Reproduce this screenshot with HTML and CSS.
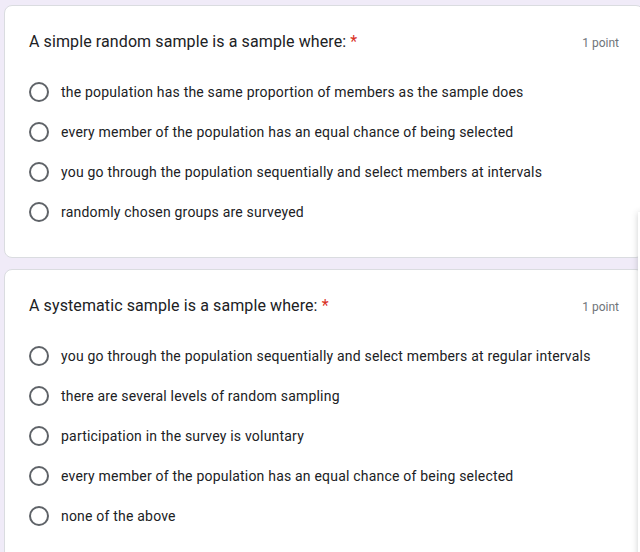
FILE: index.html
```html
<!DOCTYPE html>
<html lang="en">
<head>
  <meta charset="UTF-8" />
  <title>Quiz</title>
  <link rel="stylesheet" href="styles.css">
</head>
<body>

  <div class="form">

    <div class="card">
      <div class="question-head">
        <div class="question-title">A simple random sample is a sample where: <span class="required">*</span></div>
        <div class="points">1 point</div>
      </div>
      <div class="options">
        <label class="option"><span class="radio"></span>the population has the same proportion of members as the sample does</label>
        <label class="option"><span class="radio"></span>every member of the population has an equal chance of being selected</label>
        <label class="option"><span class="radio"></span>you go through the population sequentially and select members at intervals</label>
        <label class="option"><span class="radio"></span>randomly chosen groups are surveyed</label>
      </div>
    </div>

    <div class="card">
      <div class="question-head">
        <div class="question-title">A systematic sample is a sample where: <span class="required">*</span></div>
        <div class="points">1 point</div>
      </div>
      <div class="options">
        <label class="option"><span class="radio"></span>you go through the population sequentially and select members at regular intervals</label>
        <label class="option"><span class="radio"></span>there are several levels of random sampling</label>
        <label class="option"><span class="radio"></span>participation in the survey is voluntary</label>
        <label class="option"><span class="radio"></span>every member of the population has an equal chance of being selected</label>
        <label class="option"><span class="radio"></span>none of the above</label>
      </div>
    </div>

  </div>

  <!-- floating side toolbar, mostly off screen -->
  <div class="side-toolbar"></div>

</body>
</html>
```

FILE: styles.css
```css
body {
  margin: 0;
  background-color: #f0ebf8;
  font-family: Roboto, "Liberation Sans", Arial, sans-serif;
  color: #202124;
  overflow: hidden;
}

.form {
  width: 640px;
  margin: 5px 0 0 4px;
}

.card {
  background-color: #fff;
  border: 1px solid #dadce0;
  border-radius: 8px;
  padding: 24px 24px 25px;
  margin-bottom: 11px;
}

.question-head {
  display: flex;
  justify-content: space-between;
  align-items: baseline;
  margin-bottom: 18px;
}

.question-title {
  font-size: 16px;
  line-height: 24px;
  letter-spacing: 0.1px;
}

.required {
  color: #d93025;
}

.points {
  font-size: 12px;
  color: #70757a;
}

.options {
  display: flex;
  flex-direction: column;
}

.option {
  display: flex;
  align-items: center;
  height: 40px;
  font-size: 14px;
  letter-spacing: 0.2px;
}

.radio {
  width: 16px;
  height: 16px;
  border: 2px solid #5f6368;
  border-radius: 50%;
  margin-right: 12px;
  flex-shrink: 0;
}

.side-toolbar {
  position: absolute;
  top: 212px;
  left: 638px;
  width: 20px;
  height: 400px;
  background-color: #fff;
  box-shadow: 0 1px 6px rgba(60, 64, 67, 0.25);
}
```
